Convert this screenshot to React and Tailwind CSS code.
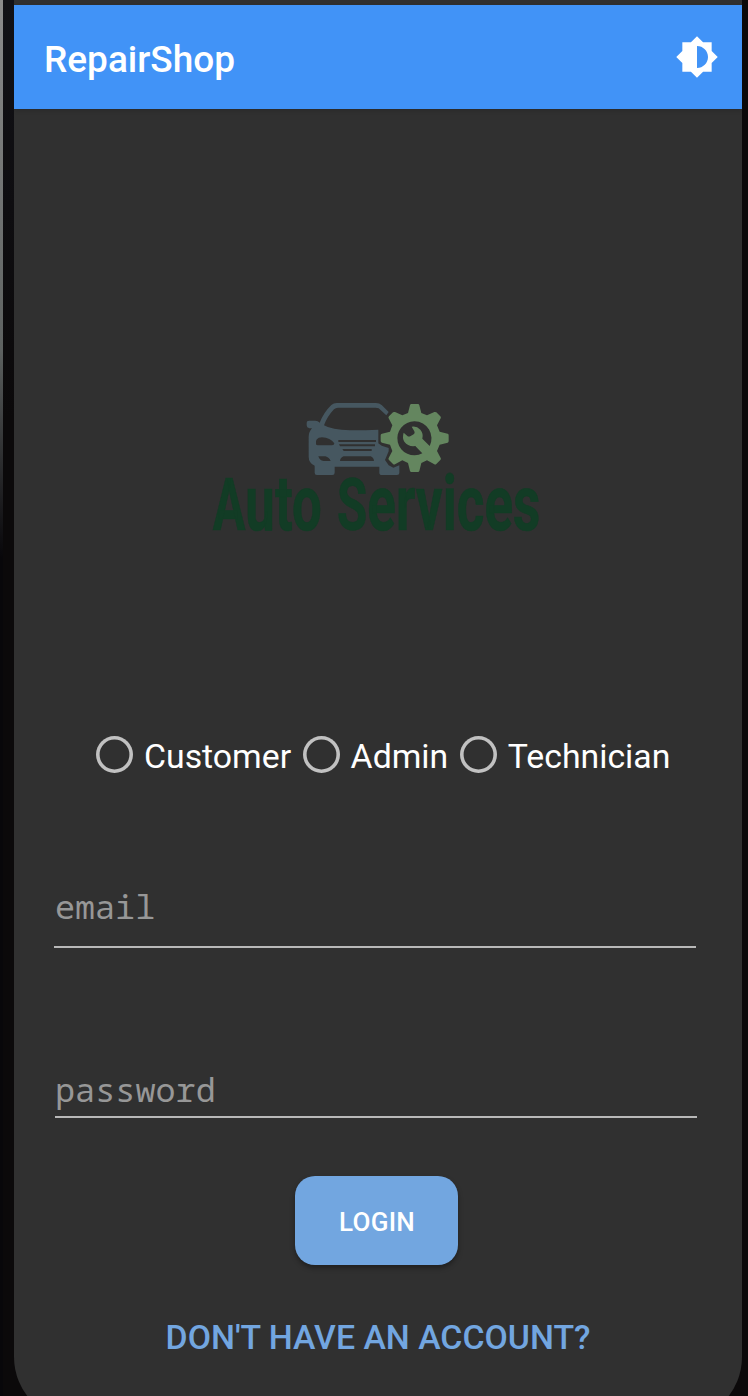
const roles = ["Customer", "Admin", "Technician"];

function BrightnessIcon() {
  return (
    <svg viewBox="0 0 24 24" className="size-11" fill="white">
      <path d="M20 15.31L23.31 12 20 8.69V4h-4.69L12 .69 8.69 4H4v4.69L.69 12 4 15.31V20h4.69L12 23.31 15.31 20H20v-4.69zM12 18V6c3.31 0 6 2.69 6 6s-2.69 6-6 6z" />
    </svg>
  );
}

function Logo() {
  return (
    <svg viewBox="0 0 1050 540" className="h-[180px] w-[350px] shrink-0">
      <g fill="#465760">
        <path
          fillRule="evenodd"
          d="M320 98Q320 92 327 92H346Q354 92 359 98Q372 66 394 45Q401 39 410 39H528Q538 39 545 45L566 66L559 76L536 55Q532 53 526 53H414Q407 53 402 58Q382 79 372 106Q395 120 450 121Q500 121 535 119V160L545 167L566 174V184L555 210L566 226L580 233L598 226V249Q598 255 591 255H546Q538 255 538 248V230H404V248Q404 255 397 255H351Q344 255 344 248V227Q326 219 326 200V140Q326 126 336 115H328Q320 113 320 106ZM348 163Q344 143 366 142Q391 143 403 160Q403 166 396 166H354Q349 166 348 163ZM355 199H376Q388 202 392 213H371Q358 211 355 199ZM431 199H512Q521 202 522 213H420Q421 202 431 199ZM415 150H528V156H415ZM417 163H525V169H420ZM427 177H515V183H431Z"
        />
      </g>
      <path
        fill="#64865f"
        fillRule="evenodd"
        d="M634 42H654Q657 42 658 46L664 69L681 76L703 66Q706 65 709 67L721 79Q724 82 722 85L711 106L719 125L743 131Q746 132 746 136V153Q746 157 743 158L719 164L711 183L722 204Q724 207 721 210L709 222Q706 225 703 223L681 211L664 219L658 243Q657 246 654 246H634Q631 246 630 243L624 219L607 211L585 223Q582 225 579 222L567 210Q564 207 566 204L577 183L570 164L546 158Q542 157 542 153V136Q542 132 546 131L570 125L577 106L566 85Q564 82 567 79L579 67Q582 65 585 66L607 76L624 69L630 46Q631 42 634 42ZM644 94A51 51 0 1 0 667 190Q658 181 646 168Q625 171 613 155Q606 143 611 128L623 139Q627 141 632 138L641 133Q646 130 643 124L635 110Q650 107 661 119Q671 131 667 146L689 168A51 51 0 0 0 644 94Z"
      />
      <g fill="#123c25" stroke="#123c25" strokeWidth="2" fontFamily="Roboto, sans-serif" fontWeight="700">
        <text transform="translate(38 419) scale(0.67 1)" fontSize="218">
          A<tspan fontSize="236">uto</tspan>
        </text>
        <text transform="translate(411 419) scale(0.675 1)" fontSize="218">
          S<tspan fontSize="236">ervices</tspan>
        </text>
      </g>
    </svg>
  );
}

function Radio({ label }) {
  return (
    <label className="flex items-center gap-[11px]">
      <span className="mb-[3px] size-[37px] rounded-full shadow-[inset_0_0_0_3.6px_#c1c1c1]" />
      <span className="pt-[2px] text-[33.8px] leading-10">{label}</span>
    </label>
  );
}

export default function App() {
  return (
    <div className="flex h-[1396px] w-[748px] overflow-hidden bg-[#0b090a] font-[Roboto,sans-serif] text-white">
      <div className="w-[3px] bg-linear-to-b from-[#8c8c8c] from-0% via-[#5e6261] via-25% to-[#08070a] to-40%" />
      <div className="w-[11px] bg-linear-to-b from-[#111116] to-[#0b090a] to-30%" />
      <main className="flex h-[1421px] w-[728px] flex-col items-center overflow-hidden rounded-b-[64px] bg-[#303030]">
        <header className="mt-[5px] flex h-[104px] w-full shrink-0 items-center justify-between bg-[#4193f7] pr-[23px] pl-[30px] shadow-[0_2px_4px_rgba(0,0,0,0.12)]">
          <h1 className="pt-1.5 text-[37px] font-medium">RepairShop</h1>
          <BrightnessIcon />
        </header>

        <div className="mt-[281px] flex w-[356px]">
          <Logo />
        </div>

        <div className="mt-[165px] flex w-full gap-[11.5px] pl-[82px]">
          {roles.map((role) => (
            <Radio key={role} label={role} />
          ))}
        </div>

        <div className="mt-[111px] flex w-full flex-col pr-[45px] pl-[40px]">
          <div className="h-[60px] w-[642px] border-b-2 border-[#b8b8b8] pl-px font-['Noto_Sans_Mono','DejaVu_Sans_Mono',monospace] text-[33.4px] leading-[36px] text-[#979797]">
            email
          </div>
          <div className="mt-[123px] ml-px h-[47px] w-[642px] border-b-2 border-[#b8b8b8] font-['Noto_Sans_Mono','DejaVu_Sans_Mono',monospace] text-[33.5px] leading-[36px] text-[#979797]">
            password
          </div>
        </div>

        <button className="mt-[58px] mr-[3px] h-[89px] w-[163px] shrink-0 rounded-[20px] bg-[#72a6e0] pt-[3px] pl-px text-[26px] font-medium tracking-[0.3px] shadow-[0_3px_5px_rgba(0,0,0,0.35)]">
          LOGIN
        </button>
        <a className="mt-[53px] text-[33.8px] leading-10 font-medium text-[#72a6e0]">DON'T HAVE AN ACCOUNT?</a>
      </main>
    </div>
  );
}
